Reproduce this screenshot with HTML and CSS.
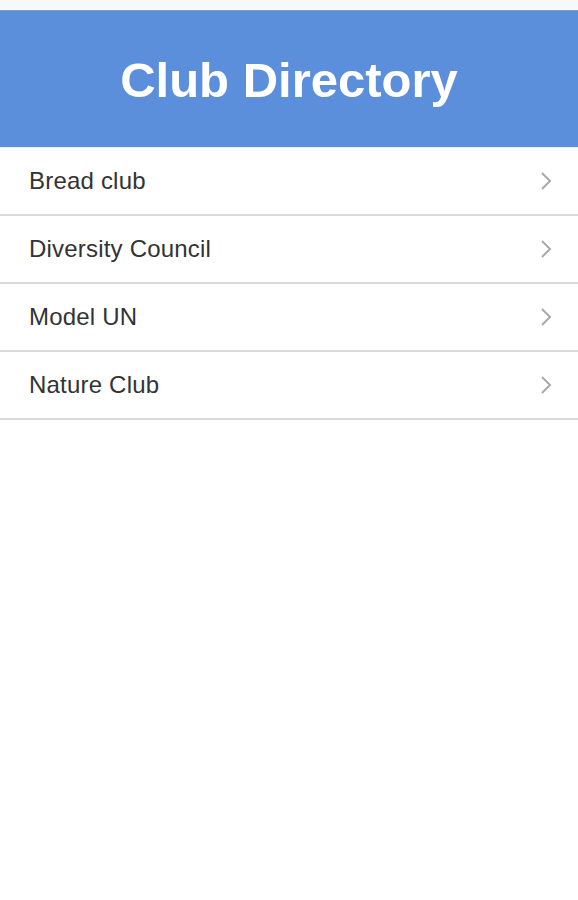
FILE: index.html
```html
<!DOCTYPE html>
<html lang="en">
<head>
    <meta charset="UTF-8">
    <meta name="viewport" content="width=device-width, initial-scale=1.0">
    <title>Club Directory</title>
    <link rel="stylesheet" href="styles.css">
</head>
<body>

<div class="status-bar"></div>

<header class="header">
    <h1>Club Directory</h1>
</header>

<ul class="club-list">
    <li class="club-item">
        <span>Bread club</span>
        <svg class="chevron" width="12" height="20" viewBox="0 0 12 20"><path d="M2 2 L10 10 L2 18"/></svg>
    </li>
    <li class="club-item">
        <span>Diversity Council</span>
        <svg class="chevron" width="12" height="20" viewBox="0 0 12 20"><path d="M2 2 L10 10 L2 18"/></svg>
    </li>
    <li class="club-item">
        <span>Model UN</span>
        <svg class="chevron" width="12" height="20" viewBox="0 0 12 20"><path d="M2 2 L10 10 L2 18"/></svg>
    </li>
    <li class="club-item">
        <span>Nature Club</span>
        <svg class="chevron" width="12" height="20" viewBox="0 0 12 20"><path d="M2 2 L10 10 L2 18"/></svg>
    </li>
</ul>

</body>
</html>
```

FILE: styles.css
```css
body {
    margin: 0;
    font-family: "Liberation Sans", Arial, sans-serif;
    background: #ffffff;
}

.status-bar {
    height: 10px;
    background: #f7f8fa;
    border-bottom: 1px solid #7d9cc9;
}

.header {
    height: 136px;
    background: #5b8edb;
    display: flex;
    align-items: center;
    justify-content: center;
}

.header h1 {
    margin: 0;
    color: #ffffff;
    font-size: 49px;
    font-weight: bold;
    padding-top: 2px;
}

.club-list {
    list-style: none;
    margin: 0;
    padding: 0;
    border-top: 1px solid #eef0f3;
}

.club-item {
    height: 66px;
    display: flex;
    align-items: center;
    justify-content: space-between;
    padding: 0 26px 0 29px;
    border-bottom: 2px solid #dadada;
    font-size: 24px;
    letter-spacing: 0.2px;
    color: #333333;
}

.chevron {
    fill: none;
    stroke: #a9a9a9;
    stroke-width: 2;
}
```
